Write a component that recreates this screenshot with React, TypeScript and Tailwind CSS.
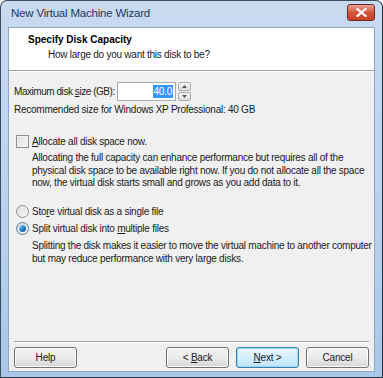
import React from "react";

const font = { fontFamily: '"Liberation Sans", Arial, sans-serif' };

function Btn({ children, primary }: { children: React.ReactNode; primary?: boolean }) {
  return (
    <div
      className={
        "w-[63px] h-[21px] flex items-center justify-center rounded-[3px] border text-[10px] tracking-[-0.2px] text-[#1a1a1a] " +
        (primary
          ? "border-[#3c7fb1] bg-gradient-to-b from-[#eaf6fd] to-[#bee6fd] shadow-[inset_0_0_0_1px_#9ad6f5]"
          : "border-[#707070] bg-gradient-to-b from-[#f2f2f2] via-[#ebebeb] to-[#d6d6d6] shadow-[inset_0_0_0_1px_#fcfcfc]")
      }
    >
      <span className="whitespace-pre">{children}</span>
    </div>
  );
}

export default function App() {
  return (
    <div style={font} className="w-[383px] h-[378px] bg-white">
      <div className="w-[383px] h-[378px] rounded-t-[7px] border border-[#3b4c5c] border-r-[#1d3440] border-b-[#1d3440] bg-gradient-to-b from-[#c7daf0] via-[#bcd3ee] to-[#a9c7ea] flex flex-col px-[7px] pb-[5px]">
        {/* title bar */}
        <div className="h-[26px] flex items-center justify-between shrink-0">
          <span className="pl-[3px] text-[11.5px] tracking-[-0.2px] text-[#1e395b] mt-[-1px]">New Virtual Machine Wizard</span>
          <div className="w-[28px] h-[17px] mt-[-4px] mr-0 rounded-[3px] border border-[#6b2b24] bg-gradient-to-b from-[#e8a193] via-[#d3553d] to-[#c6402a] flex items-center justify-center">
            <svg width="11" height="9" viewBox="0 0 11 9">
              <path d="M1.5 1 L9.5 8 M9.5 1 L1.5 8" stroke="#ffffff" strokeWidth="2.2" strokeLinecap="square" />
            </svg>
          </div>
        </div>
        {/* client */}
        <div className="flex-1 flex flex-col bg-[#f0f0f0] border border-[#8ea6c2]">
          <div className="h-[43px] bg-white border-b border-[#a0a0a0] shrink-0 pt-[5px]">
            <div className="pl-[19px] text-[10px] font-bold text-black leading-[13px]">Specify Disk Capacity</div>
            <div className="pl-[39px] text-[10px] tracking-[-0.25px] text-[#1a1a1a] leading-[13px] mt-[2px]">How large do you want this disk to be?</div>
          </div>
          <div className="h-px bg-white shrink-0" />
          <div className="flex-1 flex flex-col pl-[5px] pt-[10px] text-[10px] tracking-[-0.25px] text-[#1a1a1a]">
            <div className="flex items-center h-[19px]">
              <span className="w-[103px] whitespace-nowrap tracking-[-0.45px]">
                Maximum disk <span className="underline">s</span>ize (GB):
              </span>
              <div className="w-[59px] h-[19px] border border-[#abadb3] bg-white flex items-center justify-end pr-[2px]">
                <span className="bg-[#3399ff] text-white leading-[13px] px-[1px]">40.0</span>
              </div>
              <div className="ml-[2px] w-[13px] h-[19px] flex flex-col gap-[1px]">
                <div className="flex-1 border border-[#acacac] rounded-[2px] bg-gradient-to-b from-[#f4f4f4] to-[#dedede] flex items-center justify-center">
                  <svg width="5" height="3" viewBox="0 0 5 3"><path d="M0 3 L2.5 0 L5 3 Z" fill="#4a5a6a" /></svg>
                </div>
                <div className="flex-1 border border-[#acacac] rounded-[2px] bg-gradient-to-b from-[#f4f4f4] to-[#dedede] flex items-center justify-center">
                  <svg width="5" height="3" viewBox="0 0 5 3"><path d="M0 0 L2.5 3 L5 0 Z" fill="#4a5a6a" /></svg>
                </div>
              </div>
            </div>
            <div className="mt-[2px] leading-[13px]">Recommended size for Windows XP Professional: 40 GB</div>

            <div className="mt-[19px] flex items-center gap-[3px] pl-[2px] h-[13px]">
              <div className="w-[13px] h-[13px] border border-[#8e8f8f] bg-gradient-to-br from-[#dcdcdc] to-[#fafafa] shadow-[inset_0_0_0_1px_#f4f4f4]" />
              <span className="leading-[13px]"><span className="underline">A</span>llocate all disk space now.</span>
            </div>
            <div className="pl-[18px] mt-[4px] leading-[12.5px] w-[362px]">
              Allocating the full capacity can enhance performance but requires all of the physical disk space to be available right now. If you do not allocate all the space now, the virtual disk starts small and grows as you add data to it.
            </div>

            <div className="mt-[15px] flex items-center gap-[3px] pl-[2px] h-[13px]">
              <div className="w-[13px] h-[13px] rounded-full border border-[#8e8f8f] bg-gradient-to-br from-[#dcdcdc] to-[#fafafa]" />
              <span className="leading-[13px]">Sto<span className="underline">r</span>e virtual disk as a single file</span>
            </div>
            <div className="mt-[4px] flex items-center gap-[3px] pl-[2px] h-[13px]">
              <div className="w-[13px] h-[13px] rounded-full border border-[#5a7d9a] bg-gradient-to-br from-[#dcdcdc] to-[#fafafa] flex items-center justify-center">
                <div className="w-[7px] h-[7px] rounded-full bg-gradient-to-br from-[#9fe0f8] via-[#2b8ad1] to-[#0f4f90]" />
              </div>
              <span className="leading-[13px]">Split virtual disk into <span className="underline">m</span>ultiple files</span>
            </div>
            <div className="pl-[18px] mt-[4px] leading-[13px] w-[362px]">
              Splitting the disk makes it easier to move the virtual machine to another computer but may reduce performance with very large disks.
            </div>
            <div className="flex-1" />
            <div className="h-px bg-[#a0a0a0] mr-[5px]" />
            <div className="h-px bg-white mr-[5px]" />
            <div className="flex items-center h-[28px] pr-[5px]">
              <Btn>Help</Btn>
              <div className="flex-1" />
              <div className="flex gap-[7px]">
                <Btn>{"< "}<span className="underline">B</span>ack</Btn>
                <Btn primary><span className="underline">N</span>{"ext >"}</Btn>
                <Btn>Cancel</Btn>
              </div>
            </div>
          </div>
        </div>
      </div>
    </div>
  );
}
